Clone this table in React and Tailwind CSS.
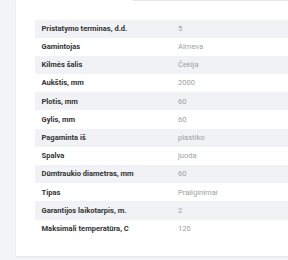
const specs = [
    ["Pristatymo terminas, d.d.", "5"],
    ["Gamintojas", "Almeva"],
    ["Kilmės šalis", "Čekija"],
    ["Aukštis, mm", "2000"],
    ["Plotis, mm", "60"],
    ["Gylis, mm", "60"],
    ["Pagaminta iš", "plastiko"],
    ["Spalva", "juoda"],
    ["Dūmtraukio diametras, mm", "60"],
    ["Tipas", "Prailginimai"],
    ["Garantijos laikotarpis, m.", "2"],
    ["Maksimali temperatūra, C", "120"]
]

export default function App() {
    return (
        <div className="w-[288px] h-[260px] overflow-hidden bg-[#f3f4f7] pl-4 font-['Roboto',sans-serif]">
            <div className="relative w-[300px] h-[256px] bg-white shadow-[0_1px_2px_rgba(0,0,0,0.08)]">
                {/* bottom edge of the block above */}
                <div className="ml-[117px] h-px bg-[#e6e6e6]" />
                <div className="pt-[18.5px] pl-[19px]">
                    <div className="w-[253px]">
                        {specs.map(([label, value], i) => (
                            <div
                                key={label}
                                className={
                                    "flex items-center h-[18.2px] text-[7.55px] leading-none " +
                                    (i % 2 === 0 ? "bg-[#f1f2f6]" : "bg-white")
                                }
                            >
                                <div className="w-[143px] pl-[6.5px] font-bold text-[#333]">{label}</div>
                                <div className="text-[#a0a0a0]">{value}</div>
                            </div>
                        ))}
                    </div>
                </div>
            </div>
        </div>
    )
}
